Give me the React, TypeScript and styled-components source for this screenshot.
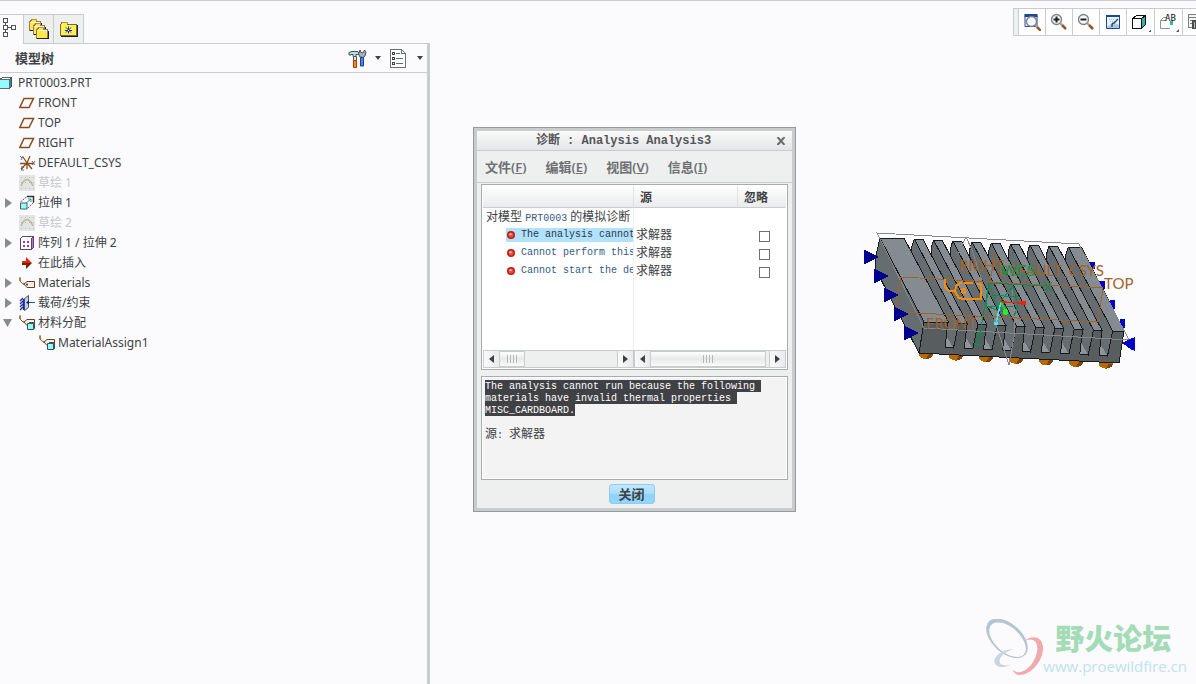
import React from 'react';
import styled, { createGlobalStyle } from 'styled-components';

const line = '#c8cccd';
const ui = `"Noto Sans", "Noto Sans CJK SC", sans-serif`;
const mono = `"Liberation Mono", "Noto Sans CJK SC", monospace`;

const GlobalStyle = createGlobalStyle`
  * { box-sizing: border-box; }
  body { margin: 0; background: #fbfbfd; color: #404144; font: 12px/20px ${ui}; overflow: hidden; }
  button { font: inherit; color: inherit; padding: 0; margin: 0; border: 0; background: none; }
  svg { display: block; flex: none; }
`;

const Page = styled.div`
  display: flex;
  min-height: 100vh;
  border-top: 1px solid ${line};
`;

/* ---------- model tree panel ---------- */

const SidePanel = styled.aside`
  flex: none;
  width: 430px;
  display: flex;
  flex-direction: column;
`;

const TabBar = styled.div`
  display: flex;
  height: 43px;
  padding-top: 13px;
  &::after { content: ''; flex: 1; border-bottom: 1px solid ${line}; }
`;

const Tab = styled.button<{ $active?: boolean }>`
  display: flex;
  align-items: center;
  justify-content: ${p => (p.$active ? 'flex-start' : 'center')};
  width: ${p => (p.$active ? 24 : 30)}px;
  padding-bottom: ${p => (p.$active ? 3 : 0)}px;
  border: solid ${line};
  border-width: 1px 1px ${p => (p.$active ? 0 : 1)}px 0;
  background: ${p => (p.$active ? 'transparent' : '#eef0f0')};
`;

const PanelBody = styled.div`
  flex: 1;
  border-right: 3px solid ${line};
`;

const PanelHeader = styled.header`
  display: flex;
  align-items: center;
  height: 29px;
  padding: 0 4px 0 15px;
  border-bottom: 1px solid ${line};
`;

const PanelTitle = styled.h2`
  flex: 1;
  margin: 0;
  font-size: 13px;
  font-weight: 700;
`;

const ToolMenu = styled.button`
  display: flex;
  align-items: center;
  justify-content: space-between;
  width: 33px;
  margin-left: 9px;
`;

const Tree = styled.ul`
  list-style: none;
  margin: 0;
  padding: 0;
`;

const TreeRow = styled.li<{ $level: number; $muted?: boolean }>`
  display: flex;
  align-items: center;
  height: 20px;
  padding-left: ${p => p.$level * 20}px;
  color: ${p => (p.$muted ? '#c6c7c8' : '#404144')};
  white-space: nowrap;
`;

const TreeToggle = styled.button`
  width: 20px;
  height: 20px;
  margin-left: -20px;
  padding-left: 3px;
`;

const TreeIcon = styled.span`
  display: flex;
  width: 19px;
  margin-left: -1px;
`;

/* ---------- graphics area ---------- */

const Viewport = styled.main`
  position: relative;
  flex: 1;
  min-width: 0;
`;

const ViewToolbar = styled.div`
  display: flex;
  justify-content: flex-end;
  padding-top: 7px;
`;

const Grip = styled.span`
  width: 6px;
  border: 1px solid ${line};
  background: #eef0f0;
`;

const ViewButton = styled.button<{ $flyout?: boolean; $cut?: boolean }>`
  display: flex;
  align-items: center;
  justify-content: ${p => (p.$cut ? 'flex-start' : 'center')};
  width: ${p => (p.$cut ? 13 : p.$flyout ? 28 : 27)}px;
  height: 28px;
  padding-left: ${p => (p.$cut ? 4 : 0)}px;
  overflow: hidden;
  border: solid ${line};
  border-width: 1px ${p => (p.$cut ? 0 : 1)}px 1px 0;
  background: #fff;
`;

const ModelView = styled.svg`
  position: absolute;
  left: 430px;
  top: 227px;
`;

const Watermark = styled.div`
  position: absolute;
  right: 9px;
  bottom: 7px;
  display: flex;
  align-items: flex-end;
`;

const WatermarkText = styled.div`
  display: flex;
  flex-direction: column;
  color: #bfe3ea;
  font: 15px/22px "Open Sans", sans-serif;
`;

const WatermarkName = styled.strong`
  padding-left: 12px;
  color: #a4dcb8;
  font: 900 29px/36px "Noto Sans CJK SC", sans-serif;
`;

/* ---------- diagnostics dialog ---------- */

const Dialog = styled.section`
  position: absolute;
  left: 43px;
  top: 126px;
  width: 323px;
  display: flex;
  flex-direction: column;
  border: 1px solid #96999b;
  background: #eef0ef;
  box-shadow: inset 0 0 0 3px ${line};
  padding: 3px;
`;

const DialogTitle = styled.header`
  display: flex;
  align-items: center;
  height: 20px;
  padding-right: 6px;
  border-bottom: 1px solid ${line};
  background: linear-gradient(#fafafa, #e4e5e6);
`;

const DialogHeading = styled.h1`
  flex: 1;
  margin: 0;
  padding-right: 6px;
  text-align: center;
  color: #55565a;
  font: 700 12px/18px ${mono};
`;

const CloseButton = styled.button`
  display: flex;
  align-items: center;
  justify-content: center;
  width: 10px;
  height: 18px;
`;

const MenuBar = styled.nav`
  display: flex;
  gap: 19px;
  height: 32px;
  padding-left: 8px;
  border-bottom: 1px solid ${line};
`;

const MenuItem = styled.button`
  color: #6f7074;
  font-size: 13px;
  font-weight: 600;
`;

const ListFrame = styled.div`
  margin: 1px 4px 0;
  padding: 1px;
  border: 1px solid #a9acae;
  background: #fff;
`;

const Grid = styled.table`
  width: 100%;
  height: 164px;
  table-layout: fixed;
  border-collapse: separate;
  border-spacing: 0;
  font: 12px/18px ${ui};
`;

const HeadCell = styled.th<{ $width: number }>`
  width: ${p => p.$width}px;
  height: 22px;
  padding: 2px 6px 0;
  text-align: left;
  border-bottom: 1px solid ${line};
  border-right: 1px solid #dfe0e1;
  background: linear-gradient(#fefefe, #eaebec);
  font-weight: 700;
  &:last-child { border-right-color: transparent; }
`;

const Cell = styled.td<{ $divide?: boolean; $pad?: number; $auto?: boolean }>`
  height: ${p => (p.$auto ? 'auto' : '18px')};
  padding: 0 0 0 ${p => p.$pad ?? 0}px;
  overflow: hidden;
  white-space: nowrap;
  border-right: 1px solid ${p => (p.$divide ? '#eeeff0' : 'transparent')};
`;

const Latin = styled.span`
  color: #35597e;
  font: 10px/10px ${mono};
`;

const Message = styled.div<{ $selected?: boolean }>`
  display: flex;
  align-items: center;
  height: 14px;
  margin-left: 23px;
  padding-left: 1px;
  gap: 6px;
  font: 10px/14px ${mono};
  color: ${p => (p.$selected ? '#303840' : '#35597e')};
  background: ${p => (p.$selected ? '#b0e2ff' : 'transparent')};
`;

const Check = styled.input`
  appearance: none;
  display: block;
  width: 11px;
  height: 11px;
  margin: 3px 0 0;
  border: 1px solid #6e7073;
  background: #fff;
`;

const Scrollers = styled.div`
  display: flex;
  height: 18px;
`;

const ScrollBar = styled.div<{ $width?: number }>`
  display: flex;
  flex: ${p => (p.$width ? `0 0 ${p.$width}px` : '1')};
  border: 1px solid ${line};
`;

const Arrow = styled.button`
  display: flex;
  align-items: center;
  justify-content: center;
  width: 15px;
  background: linear-gradient(90deg, #fafafa, #e9eaeb);
`;

const Track = styled.div`
  flex: 1;
  border: solid ${line};
  border-width: 0 1px;
  background: #eef0ef;
`;

const Thumb = styled.div<{ $width: number }>`
  display: flex;
  align-items: center;
  justify-content: center;
  width: ${p => p.$width}px;
  height: 16px;
  border: 1px solid ${line};
  border-left: 0;
  background: linear-gradient(#fefefe, #e8e9e9 50%, #fafafa);
`;

const Details = styled.div`
  margin: 6px 4px 0;
  height: 104px;
  padding: 3px;
  border: 1px solid #a9acae;
  background: #f3f3f3;
  box-shadow: inset 0 0 0 1px #fff;
  font: 10px/14px ${mono};
`;

const Selected = styled.mark`
  display: block;
  width: fit-content;
  height: 12px;
  white-space: pre;
  color: #fff;
  background: #404144;
`;

const Source = styled.p`
  margin: 12px 0 0;
`;

const Han = styled.span`
  font-size: 12px;
`;

const DialogFooter = styled.footer`
  display: flex;
  justify-content: center;
  padding: 4px 6px 4px 0;
`;

const PrimaryButton = styled.button`
  width: 46px;
  height: 20px;
  border: 1px solid #8ccbf5;
  border-radius: 3px;
  background: linear-gradient(#c4e8fd, #a6ddfb 50%, #8fd2fb 51%, #94d5fb);
  font-size: 13px;
  font-weight: 700;
  line-height: 18px;
`;

/* ---------- icons ---------- */

const Caret = () => (
  <svg width="6" height="4"><path d="M0 0h6L3 4z" fill="#404144" /></svg>
);

const Expander = ({ open }: { open?: boolean }) => (
  <svg width="10" height="10">
    <path d={open ? 'M0 1h9L4.500 9z' : 'M2 0l7 5-7 5z'} fill="#868b8e" />
  </svg>
);

const TreeTabIcon = () => (
  <svg width="18" height="20" fill="none" stroke="#505254" shapeRendering="crispEdges">
    <path d="M3.500.5h4v4h-4zM3.500 7.500h4v4h-4zM3.500 14.500h4v4h-4zM11.500 7.500h4v4h-4zM5.500 4.500v3M5.500 11.500v3M7.500 9.500h4" />
  </svg>
);

const FoldersIcon = () => (
  <svg width="20" height="20" shapeRendering="crispEdges">
    {[[0, 0], [4, 4], [7, 8]].map(([x, y]) => (
      <g key={x} transform={`translate(${x} ${y})`}>
        <path d="M1 2.500L3 .5h4l1 2h3.500v8.500h-11z" fill="#ffe94a" stroke="#8d7a6a" />
        <path d="M2 3.500h9" stroke="#fffbd0" />
        <path d="M12 4v7.500H1" fill="none" stroke="#202020" />
        <path d="M3 .5h4l1 1" fill="none" stroke="#c98b3c" />
      </g>
    ))}
  </svg>
);

const FavoriteIcon = () => (
  <svg width="18" height="16" shapeRendering="crispEdges">
    <path d="M.5 3.500L2 1.500h5l1 2h8.500v11H.5z" fill="#fff04f" stroke="#6f6a50" />
    <path d="M2 1.500h5l1 1" fill="none" stroke="#c98b3c" />
    <path d="M17 4v11.500H1" fill="none" stroke="#202020" />
    <path d="M8.500 5.500v7M5 9.500h7M6 6.500l5 5M11 6.500l-5 5" stroke="#1226b8" shapeRendering="auto" />
    <path d="M8 9h1v1H8z" fill="#fff" />
  </svg>
);

const ToolsIcon = () => (
  <svg width="19" height="19">
    <path d="M1 6V3.500L4 2.500h6l1 2v1H8v2H5v-2H3V6z" fill="#b9dde0" stroke="#3c5558" />
    <path d="M5.500 7.500h3v5h-3z" fill="#d6e6e6" stroke="#556" />
    <path d="M5.500 11.500h3v7h-3z" fill="#f08a1a" stroke="#a8420c" />
    <path d="M12 1l1 2.500 2 .5 1.500-3 1.500 2-1 4-2 1.500-3-.5-1.500-3z" fill="#a9b2b8" stroke="#474e54" />
    <path d="M12.500 8.500h3v8.500h-3z" fill="#4e86e4" stroke="#1c3f94" />
  </svg>
);

const ListIcon = () => (
  <svg width="17" height="19" shapeRendering="crispEdges">
    <path d="M.5.5h11l4 4v14H.5z" fill="#fff" stroke="#6c7074" />
    <path d="M11.500.5v4h4" fill="none" stroke="#6c7074" />
    <path d="M6 4.500h4M6 9.500h7M6 14.500h7" stroke="#66696c" />
    <path d="M2.500 3.500h2v2h-2zM2.500 8.500h2v2h-2zM2.500 13.500h2v2h-2z" fill="none" stroke="#404244" />
  </svg>
);

const PartIcon = () => (
  <svg width="14" height="14" shapeRendering="crispEdges">
    <path d="M.5 3.500l3-2h9v8l-3 3h-9z" fill="#eafcfd" stroke="#5b6b6d" />
    <path d="M10.500 3.500l2-2v9l-2 2z" fill="#3b8f94" stroke="#405052" />
    <path d="M.5 3.500h10v9H.5z" fill="#93fafd" stroke="#5b6b6d" />
  </svg>
);

const PlaneIcon = () => (
  <svg width="16" height="12"><path d="M5 1.500h9.500l-4.500 9H.8z" fill="none" stroke="#8c4a1c" strokeWidth="1.500" /></svg>
);

const CsysIcon = () => (
  <svg width="17" height="16" fill="none">
    <path d="M1 8.500h14M8 8L4 2M8 8l3-7M8 8l-6 6M8 8l5 6M8 8v6" stroke="#8c4a1c" strokeWidth="1.300" />
    <path d="M1 1l2 2M4 1L2 5M13 6l3 4M16 6l-3 4M2 12h3l-3 3h3" stroke="#66696b" />
  </svg>
);

const SketchIcon = () => (
  <svg width="16" height="16">
    <path d="M0 0h16v16H0z" fill="#e3e4e4" />
    <path d="M2 2.500h13M2 7.500h13M2 13.500h13" stroke="#b9b9ac" strokeDasharray="1 3" />
    <path d="M2 11C4 6 6 4.500 8 4.500s4 2 6 6.500" fill="none" stroke="#bdb39c" strokeWidth="1.300" />
  </svg>
);

const ExtrudeIcon = () => (
  <svg width="16" height="16" fill="none">
    <path d="M1.500 7L8 1.500h6.500v6L8 14" stroke="#55595c" strokeDasharray="2 1" />
    <path d="M8 1.500h6.500v6" stroke="#303234" strokeWidth="1.500" />
    <path d="M6 9l6-5M9 4h3v3" stroke="#2e9aa0" />
    <path d="M1.500 8h6.500v6h-6.500z" fill="#93fafd" stroke="#4c6466" />
  </svg>
);

const PatternIcon = () => (
  <svg width="16" height="15" shapeRendering="crispEdges">
    <path d="M1.500 2.500l2-2h11v11l-2 2h-11z" fill="#fff" stroke="#5a4668" />
    <path d="M12.500 2.500l2-2v11l-2 2z" fill="#bb6ce6" stroke="#5a4668" />
    <path d="M4 5h2v2H4zM8 5h2v2H8zM4 9h2v2H4zM8 9h2v2H8z" fill="#9a33d6" />
  </svg>
);

const InsertIcon = () => (
  <svg width="14" height="12">
    <path d="M3 4h4V0l6 6H3z" fill="#f02010" />
    <path d="M3 6h10l-6 6V8H3z" fill="#6d2408" />
  </svg>
);

const tagPath = 'M1 1v3l3 3h2M5 7l3-2.500h7.500v6H8z';
const MaterialIcon = () => (
  <svg width="17" height="12">
    <path d={tagPath} fill="#f6efdc" stroke="#5c4038" />
    <path d="M1 0v4l3 3h1" fill="none" stroke="#a0622a" />
    <circle cx="8" cy="7.500" r="1" fill="#5c2018" />
  </svg>
);

const AssignIcon = () => (
  <svg width="17" height="16">
    <path d={tagPath} fill="#f6efdc" stroke="#5c4038" />
    <path d="M1 0v4l3 3h1" fill="none" stroke="#a0622a" />
    <path d="M9.500 8.500l1-1h5v6l-1 1" fill="#3b8f94" stroke="#405052" />
    <path d="M8.500 8.500h6v6h-6z" fill="#93fafd" stroke="#405052" />
  </svg>
);

const LoadIcon = () => (
  <svg width="17" height="16" fill="none">
    <path d="M5.500 3.500l4-3v12l-4 3z" fill="#c3cce8" stroke="#4a5070" />
    <path d="M4.500 4v11M1 6l3-3M1 9l3-3M1 12l3-3M1 15l3-3" stroke="#1a2a9c" strokeWidth="1.300" />
    <path d="M16 7.500H8" stroke="#1f4fae" />
    <path d="M7 7.500l3-2v4z" fill="#101c60" />
  </svg>
);

const Lens = ({ x, y, children }: { x: number; y: number; children?: React.ReactNode }) => (
  <g transform={`translate(${x} ${y})`} fill="none">
    <circle cx="5.500" cy="5.500" r="5" fill="#f6f7f7" stroke="#7b7f82" strokeWidth="1.300" />
    {children}
    <path d="M9 9l2 2" stroke="#9a9a9a" strokeWidth="2" />
    <path d="M11 11l4 4" stroke="#96522c" strokeWidth="2.500" />
  </g>
);

const RefitIcon = () => (
  <svg width="18" height="18">
    <path d="M2 2.500h12v11H2z" fill="#fff" stroke="#1d4596" />
    <path d="M1.500 2.500h13" stroke="#1d4596" strokeWidth="3" />
    <Lens x={3} y={3} />
  </svg>
);
const ZoomInIcon = () => (
  <svg width="18" height="18"><Lens x={1} y={1}><path d="M2.500 5.500h6M5.500 2.500v6" stroke="#222" strokeWidth="2" /></Lens></svg>
);
const ZoomOutIcon = () => (
  <svg width="18" height="18"><Lens x={1} y={1}><path d="M2.500 5.500h6" stroke="#222" strokeWidth="2" /></Lens></svg>
);
const RepaintIcon = () => (
  <svg width="16" height="16">
    <path d="M1.500 1.500h13v13h-13z" fill="#e6f7fb" stroke="#1d4596" />
    <path d="M1 2h14" stroke="#1d4596" strokeWidth="2" />
    <path d="M2 13l4-3 4-1 4 2v3H2z" fill="#a9c8ea" />
    <path d="M4 5.500h6M5 7.500h6" stroke="#8ec9d6" strokeDasharray="1 1" />
    <path d="M7 13v-2c0-2 2-2 2-2l4-4" fill="none" stroke="#333a50" strokeWidth="1.300" />
  </svg>
);
const DisplayIcon = () => (
  <svg width="22" height="20" shapeRendering="crispEdges">
    <path d="M2.500 6.500l4-3h9v9l-4 4h-9z" fill="#fff" stroke="#111" />
    <path d="M11.500 6.500l4-3v9l-4 4z" fill="#35b3ae" stroke="#111" />
    <path d="M2.500 6.500h9v10" fill="none" stroke="#111" />
    <path d="M21 17v3h-3z" fill="#55595c" />
  </svg>
);
const SavedViewIcon = () => (
  <svg width="22" height="20" fill="none">
    <path d="M2.500 8.500l3-3h3M12 16.500H2.500v-8h6" stroke="#8a9699" />
    <path d="M12 9h3v4h-3z" fill="#2fb8b0" />
    <text x="7" y="9" fill="#111" fontSize="9" fontFamily="DejaVu Sans Mono, monospace">AB</text>
    <path d="M21 17v3h-3z" fill="#55595c" />
  </svg>
);
const ClippedIcon = () => (
  <svg width="18" height="18" shapeRendering="crispEdges">
    <path d="M1.500 1.500h13v13h-13z" fill="#f4f4f4" stroke="#7b7f82" />
    <path d="M1 4.500h14M3 7.500h3M3 10.500h2" stroke="#7b7f82" />
    <path d="M5 7h9v9H5z" fill="#4a4d50" />
    <path d="M7 9v6" stroke="#b9bcbe" />
  </svg>
);

const ErrorDot = () => (
  <svg width="8" height="8">
    <circle cx="4" cy="4" r="4" fill="#c01a10" />
    <circle cx="4" cy="4" r="2.500" fill="#e8503c" />
    <path d="M2.500 2.500h2v1.500h-2z" fill="#ffe4dc" />
  </svg>
);

const ArrowGlyph = ({ right }: { right?: boolean }) => (
  <svg width="5" height="8"><path d={right ? 'M0 0l5 4-5 4z' : 'M5 0v8L0 4z'} fill="#404144" /></svg>
);

const ThumbLines = () => (
  <svg width="11" height="8" shapeRendering="crispEdges">
    <path d="M.5 0v8M3.500 0v8M6.500 0v8M9.500 0v8" stroke="#b4b6b8" />
  </svg>
);

/* ---------- heat-sink model ---------- */

const grooves = Array.from({ length: 9 }, (_, k) => ({
  x: 914.3 + 19.25 * k,
  y: 239 + k,
  w: k === 8 ? 13 : 8.500,
  fw: k === 8 ? 11.500 : 8.500,
}));
const feet = [926, 956, 986, 1016, 1046, 1076, 1106];
const cones = [[864, 250], [874, 269], [884, 288], [894, 307], [904, 326]];

const HeatSink = () => (
  <ModelView width="280" height="146" viewBox="860 228 280 146" fill="none" shapeRendering="crispEdges">
    <g fill="#0000cd">
      <path d="M1090 262h5v7h-5zM1099 281h6v8h-6zM1110 300h5v9h-5zM1120 319h5v9h-5z" />
    </g>
    {feet.map((x, i) => (
      <g key={x}>
        <ellipse cx={x} cy={354 + i * 1.600} rx="7" ry="5" fill="#b56a08" />
        <path d={`M${x} ${359 + i * 1.600}q6 0 7-5h-4z`} fill="#7c430a" />
      </g>
    ))}
    <g stroke="#17191b">
      <path d="M880 238L875 260V268L919 353L924 322z" fill="#666d70" />
      <path d="M924 322L1124 332L1119 363L919 353z" fill="#585d60" stroke="none" />
      {grooves.map(({ x, y }) => (
        <g key={x}>
          <path
            d={`M${x} ${y}l-2.500 8v8L${x + 33.700} ${y + 83}l-3 25 8.500 1L${x + 44.400} ${y + 84}z`}
            fill="#666d71"
            stroke="none"
          />
          <path d={`M${x + 32} ${y + 97}l-1.300 11 8.500 1z`} fill="#8d959a" stroke="none" />
          <path d={`M${x} ${y}l-2.500 8v8M${x + 33.700} ${y + 83}l-3 25 8.500 1L${x + 44.400} ${y + 84}`} />
        </g>
      ))}
      <path d="M880 238H904L948.500 322H924z" fill="#848c92" />
      {grooves.map(({ x, y, w, fw }) => (
        <path key={x} d={`M${x} ${y}h${w}L${x + 44.400 + fw} ${y + 84}h${-fw}z`} fill="#848c92" />
      ))}
      <path d="M924 322L919 353L1119 363L1124 331" />
    </g>
    <g stroke="#858788">
      <path d="M877 233L1079 244L1129 340L924 328z" />
      <path d="M966 237L958 254M966 237L972 250L1009 365L1015 331L1012 290" />
    </g>
    <g stroke="#a0622a">
      <path d="M901 277L1103 288L1098 322L895 312z" />
      <path d="M996 253L988 290" />
    </g>
    <g stroke="#ff8c00" strokeWidth="2">
      <path d="M945 279v8l4 4h6M981 284v15h-17M981 284h-4M973 283h-9M962 282l-6 4-1 6 4 6 5 1" />
      <circle cx="963.500" cy="291" r="2" />
    </g>
    <g stroke="#0b8a4f">
      <path d="M989 283L1046 286M989 283L980 333L975 344h8M976 333h7l-8 11M989 283L986 306L1011 315M989 283L999 312M1013 286L1018 306L1014 316M1000 302L1013 286M990 295L1018 297M986 306H1013M1001 266L1005 276" />
      <path d="M1044 282l8 10M1052 282l-8 10" />
    </g>
    <g fontFamily="Lato, sans-serif" fontWeight="400" fontSize="15" fill="#a0622a" stroke="none">
      <text x="959" y="271">RIGHT</text>
      <text x="1104" y="289">TOP</text>
      <text x="926" y="329">FRONT</text>
      <text x="998" y="276">DEFAULT_CSYS</text>
      <text x="1001" y="276" fill="#0b9a55">WCS</text>
    </g>
    <g fill="#00008f" stroke="none">
      {cones.map(([x, y]) => <path key={x} d={`M${x} ${y}v14l3-1 12-6-12-6z`} />)}
      <path d="M1135 337v14l-3-1-10-7 10-5z" fill="#0000cd" />
    </g>
    <g strokeWidth="1.500">
      <path d="M1001 302L1023 303" stroke="#f02010" />
      <path d="M1001 302L996 323" stroke="#3fe8ff" />
      <path d="M1001 302L1006 312" stroke="#20e020" />
    </g>
    <circle cx="1023.500" cy="303" r="2.500" fill="#f02010" />
    <circle cx="996" cy="323.500" r="2" fill="#3fe8ff" />
    <circle cx="1005.500" cy="312" r="3" fill="#28f028" />
  </ModelView>
);

const WatermarkLogo = () => (
  <svg width="58" height="58" viewBox="0 0 174 174" fillRule="evenodd">
    <g transform="translate(66 58) rotate(42)">
      <path d="M-74 0a74 44 0 1 0 148 0a74 44 0 1 0-148 0M-62 2a66 37 0 1 0 132 0a66 37 0 1 0-132 0" fill="#b4c4d2" />
    </g>
    <path d="M118 67C140 45 176 52 174 90C172 130 136 168 104 168C92 168 86 160 84 152C98 166 120 160 138 138C160 110 166 66 140 62C132 61 124 64 118 67z" fill="#f0a9ad" />
    <path d="M84 92C60 88 28 108 28 126C28 144 52 150 76 138C58 142 42 138 44 124C46 108 66 96 84 92z" fill="#ccd5de" />
  </svg>
);

/* ---------- data ---------- */

type Node = { label: string; icon: React.ReactNode; level: number; toggle?: 'open' | 'closed'; muted?: boolean };

const nodes: Node[] = [
  { label: 'PRT0003.PRT', icon: <PartIcon />, level: 0 },
  { label: 'FRONT', icon: <PlaneIcon />, level: 1 },
  { label: 'TOP', icon: <PlaneIcon />, level: 1 },
  { label: 'RIGHT', icon: <PlaneIcon />, level: 1 },
  { label: 'DEFAULT_CSYS', icon: <CsysIcon />, level: 1 },
  { label: '草绘 1', icon: <SketchIcon />, level: 1, muted: true },
  { label: '拉伸 1', icon: <ExtrudeIcon />, level: 1, toggle: 'closed' },
  { label: '草绘 2', icon: <SketchIcon />, level: 1, muted: true },
  { label: '阵列 1 / 拉伸 2', icon: <PatternIcon />, level: 1, toggle: 'closed' },
  { label: '在此插入', icon: <InsertIcon />, level: 1 },
  { label: 'Materials', icon: <MaterialIcon />, level: 1, toggle: 'closed' },
  { label: '载荷/约束', icon: <LoadIcon />, level: 1, toggle: 'closed' },
  { label: '材料分配', icon: <AssignIcon />, level: 1, toggle: 'open' },
  { label: 'MaterialAssign1', icon: <AssignIcon />, level: 2 },
];

const menus = [['文件', 'F'], ['编辑', 'E'], ['视图', 'V'], ['信息', 'I']];

const messages = [
  'The analysis cannot run because the following materials have invalid thermal properties',
  'Cannot perform this analysis',
  'Cannot start the design study',
];

const viewTools: { label: string; icon: React.ReactNode; flyout?: boolean }[] = [
  { label: '重新调整', icon: <RefitIcon /> },
  { label: '放大', icon: <ZoomInIcon /> },
  { label: '缩小', icon: <ZoomOutIcon /> },
  { label: '重画', icon: <RepaintIcon /> },
  { label: '显示样式', icon: <DisplayIcon />, flyout: true },
  { label: '已保存方向', icon: <SavedViewIcon />, flyout: true },
];

const Scroll = ({ width, thumb }: { width?: number; thumb: number }) => (
  <ScrollBar $width={width}>
    <Arrow aria-label="向左滚动"><ArrowGlyph /></Arrow>
    <Track><Thumb $width={thumb}><ThumbLines /></Thumb></Track>
    <Arrow aria-label="向右滚动"><ArrowGlyph right /></Arrow>
  </ScrollBar>
);

const DiagnosticsDialog = () => (
  <Dialog role="dialog" aria-labelledby="diag-title">
    <DialogTitle>
      <DialogHeading id="diag-title">诊断 : Analysis Analysis3</DialogHeading>
      <CloseButton aria-label="关闭窗口">
        <svg width="10" height="8"><path d="M1.500 0l7 8M8.500 0l-7 8" stroke="#6a6c70" strokeWidth="2" /></svg>
      </CloseButton>
    </DialogTitle>
    <MenuBar>
      {menus.map(([name, key]) => (
        <MenuItem key={key}>{name}(<u>{key}</u>)</MenuItem>
      ))}
    </MenuBar>
    <ListFrame>
      <Grid>
        <thead>
          <tr>
            <HeadCell $width={151} aria-label="诊断" />
            <HeadCell $width={104}>源</HeadCell>
            <HeadCell $width={48}>忽略</HeadCell>
          </tr>
        </thead>
        <tbody>
          <tr>
            <Cell $divide $pad={3}>对模型 <Latin>PRT0003</Latin> 的模拟诊断</Cell>
            <Cell />
            <Cell />
          </tr>
          {messages.map((text, i) => (
            <tr key={text}>
              <Cell $divide><Message $selected={i === 0}><ErrorDot />{text}</Message></Cell>
              <Cell $pad={2}>求解器</Cell>
              <Cell $pad={21}><Check type="checkbox" aria-label={`忽略 ${text}`} /></Cell>
            </tr>
          ))}
          <tr>
            <Cell $divide $auto />
            <Cell $auto />
            <Cell $auto />
          </tr>
        </tbody>
      </Grid>
      <Scrollers>
        <Scroll width={151} thumb={25} />
        <Scroll thumb={115} />
      </Scrollers>
    </ListFrame>
    <Details>
      <Selected>{'The analysis cannot run because the following '}</Selected>
      <Selected>{'materials have invalid thermal properties '}</Selected>
      <Selected>MISC_CARDBOARD.</Selected>
      <Source><Han>源</Han>: <Han>求解器</Han></Source>
    </Details>
    <DialogFooter>
      <PrimaryButton>关闭</PrimaryButton>
    </DialogFooter>
  </Dialog>
);

export default function App() {
  return (
    <Page>
      <GlobalStyle />
      <SidePanel>
        <TabBar>
          <Tab $active aria-label="模型树"><TreeTabIcon /></Tab>
          <Tab aria-label="文件夹浏览器"><FoldersIcon /></Tab>
          <Tab aria-label="收藏夹"><FavoriteIcon /></Tab>
        </TabBar>
        <PanelBody>
          <PanelHeader>
            <PanelTitle>模型树</PanelTitle>
            <ToolMenu aria-label="设置"><ToolsIcon /><Caret /></ToolMenu>
            <ToolMenu aria-label="显示"><ListIcon /><Caret /></ToolMenu>
          </PanelHeader>
          <Tree>
            {nodes.map(n => (
              <TreeRow key={n.label} $level={n.level} $muted={n.muted}>
                {n.toggle && (
                  <TreeToggle aria-label={n.label}><Expander open={n.toggle === 'open'} /></TreeToggle>
                )}
                <TreeIcon>{n.icon}</TreeIcon>
                {n.label}
              </TreeRow>
            ))}
          </Tree>
        </PanelBody>
      </SidePanel>
      <Viewport>
        <ViewToolbar>
          <Grip />
          {viewTools.map(t => (
            <ViewButton key={t.label} $flyout={t.flyout} aria-label={t.label}>{t.icon}</ViewButton>
          ))}
          <ViewButton $cut aria-label="视图管理器"><ClippedIcon /></ViewButton>
        </ViewToolbar>
        <HeatSink />
        <DiagnosticsDialog />
        <Watermark>
          <WatermarkLogo />
          <WatermarkText>
            <WatermarkName>野火论坛</WatermarkName>
            www.proewildfire.cn
          </WatermarkText>
        </Watermark>
      </Viewport>
    </Page>
  );
}
